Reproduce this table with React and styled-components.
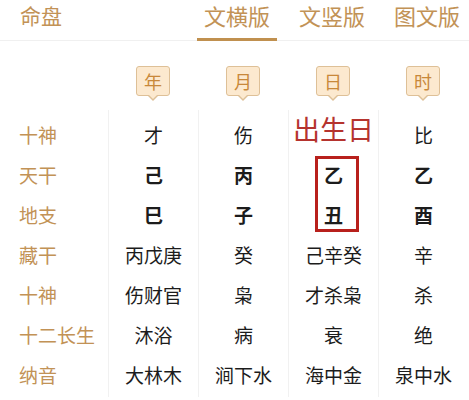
import React from "react";
import styled, { createGlobalStyle } from "styled-components";

const GlobalStyle = createGlobalStyle`
  html, body {
    margin: 0;
    padding: 0;
    background: #ffffff;
    font-family: "Noto Sans CJK SC", "Noto Sans", sans-serif;
  }
  * {
    box-sizing: border-box;
  }
`;

const pillars = [
  {
    key: "year",
    tag: "年",
    shishen: "才",
    gan: "己",
    zhi: "巳",
    canggan: "丙戊庚",
    fushen: "伤财官",
    changsheng: "沐浴",
    nayin: "大林木",
  },
  {
    key: "month",
    tag: "月",
    shishen: "伤",
    gan: "丙",
    zhi: "子",
    canggan: "癸",
    fushen: "枭",
    changsheng: "病",
    nayin: "涧下水",
  },
  {
    key: "day",
    tag: "日",
    shishen: "出生日",
    gan: "乙",
    zhi: "丑",
    canggan: "己辛癸",
    fushen: "才杀枭",
    changsheng: "衰",
    nayin: "海中金",
    isDay: true,
  },
  {
    key: "hour",
    tag: "时",
    shishen: "比",
    gan: "乙",
    zhi: "酉",
    canggan: "辛",
    fushen: "杀",
    changsheng: "绝",
    nayin: "泉中水",
  },
];

const labels = ["十神", "天干", "地支", "藏干", "十神", "十二长生", "纳音"];

const tabs = ["文横版", "文竖版", "图文版"];

const App = () => {
  return (
    <PageStyled>
      <GlobalStyle />
      <HeaderStyled>
        <TitleStyled>命盘</TitleStyled>
        <TabGroupStyled>
          {tabs.map((tab, i) => (
            <TabStyled key={tab} active={i === 0}>
              {tab}
            </TabStyled>
          ))}
        </TabGroupStyled>
      </HeaderStyled>

      <TagRowStyled>
        <span />
        {pillars.map((p) => (
          <TagCellStyled key={p.key}>
            <TagStyled>{p.tag}</TagStyled>
          </TagCellStyled>
        ))}
      </TagRowStyled>

      <TableStyled>
        <LabelColumnStyled>
          {labels.map((label, i) => (
            <LabelStyled key={i}>{label}</LabelStyled>
          ))}
        </LabelColumnStyled>

        {pillars.map((p) => (
          <PillarColumnStyled key={p.key}>
            {p.isDay ? (
              <CellStyled top>
                <BirthDayStyled>{p.shishen}</BirthDayStyled>
              </CellStyled>
            ) : (
              <CellStyled>{p.shishen}</CellStyled>
            )}
            <GanZhiStyled marked={p.isDay}>
              <CellStyled bold>{p.gan}</CellStyled>
              <CellStyled bold>{p.zhi}</CellStyled>
            </GanZhiStyled>
            <CellStyled>{p.canggan}</CellStyled>
            <CellStyled>{p.fushen}</CellStyled>
            <CellStyled>{p.changsheng}</CellStyled>
            <CellStyled>{p.nayin}</CellStyled>
          </PillarColumnStyled>
        ))}
      </TableStyled>
    </PageStyled>
  );
};

const gold = "#c29256";

const PageStyled = styled.div`
  width: 469px;
  height: 400px;
  overflow: hidden;
  background: #fff;
`;

const HeaderStyled = styled.div`
  height: 41px;
  display: flex;
  align-items: flex-start;
  justify-content: space-between;
  padding: 0 2px 0 20px;
  border-bottom: 1px solid #f0f0f0;
`;

const TitleStyled = styled.div`
  padding-top: 4px;
  font-size: 21px;
  line-height: 22px;
  color: ${gold};
`;

const TabGroupStyled = styled.div`
  display: flex;
  gap: 15px;
`;

const TabStyled = styled.div`
  width: 80px;
  height: 41px;
  padding-top: 4px;
  text-align: center;
  font-size: 22px;
  line-height: 22px;
  color: ${gold};
  border-bottom: 3px solid ${({ active }) => (active ? "#c0904f" : "transparent")};
`;

const TagRowStyled = styled.div`
  display: grid;
  grid-template-columns: 108px repeat(4, 90px);
  padding: 25px 0 9px;
`;

const TagCellStyled = styled.div`
  display: flex;
  justify-content: center;
`;

const TagStyled = styled.div`
  position: relative;
  width: 34px;
  height: 30px;
  margin-bottom: 5px;
  display: flex;
  align-items: center;
  justify-content: center;
  font-size: 18px;
  color: #c8883a;
  background: #fce9cf;
  border: 1px solid #dec097;
  border-radius: 3px;

  &::before,
  &::after {
    content: "";
    position: absolute;
    left: 50%;
    width: 0;
    height: 0;
    border-style: solid;
  }

  &::before {
    bottom: -6px;
    margin-left: -6px;
    border-width: 6px 6px 0 6px;
    border-color: #dec097 transparent transparent transparent;
  }

  &::after {
    bottom: -4px;
    margin-left: -5px;
    border-width: 5px 5px 0 5px;
    border-color: #fce9cf transparent transparent transparent;
  }
`;

const TableStyled = styled.div`
  display: grid;
  grid-template-columns: 108px repeat(4, 90px);
`;

const LabelColumnStyled = styled.div`
  display: flex;
  flex-direction: column;
  padding: 4px 0 3px;
`;

const LabelStyled = styled.div`
  height: 40px;
  display: flex;
  align-items: center;
  padding-left: 19px;
  font-size: 19px;
  color: ${gold};
`;

const PillarColumnStyled = styled.div`
  display: flex;
  flex-direction: column;
  padding: 4px 0 3px;
  border-left: 1px solid #f1f1f1;
`;

const CellStyled = styled.div`
  height: 40px;
  display: flex;
  align-items: ${({ top }) => (top ? "flex-start" : "center")};
  justify-content: center;
  font-size: 19px;
  font-weight: ${({ bold }) => (bold ? 700 : 400)};
  color: #1c1c1c;
`;

const GanZhiStyled = styled.div`
  position: relative;

  &::after {
    content: "";
    display: ${({ marked }) => (marked ? "block" : "none")};
    position: absolute;
    top: 2px;
    bottom: 2px;
    left: 50%;
    width: 38px;
    margin-left: -19px;
    border: 3px solid #b8201c;
  }
`;

const BirthDayStyled = styled.span`
  margin-top: 0px;
  font-size: 27px;
  line-height: 30px;
  color: #b5332e;
  white-space: nowrap;
`;

export default App;
